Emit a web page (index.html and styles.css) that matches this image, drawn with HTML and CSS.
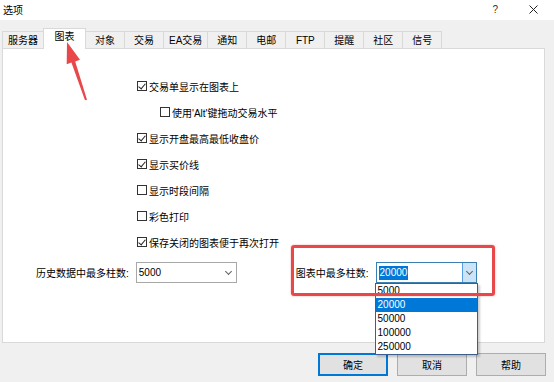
FILE: index.html
```html
<!doctype html>
<html lang="zh-CN">
    <head>
        <meta charset="UTF-8" />
        <title>选项</title>
        <link rel="stylesheet" href="styles.css">
    </head>
    <body>
        <div class="dialog">
            <div class="titlebar">
                <span class="title">选项</span>
                <span class="help">?</span>
                <svg class="close" width="9" height="9" viewBox="0 0 9 9">
                    <path d="M0.5 0.5 L8.5 8.5 M8.5 0.5 L0.5 8.5" stroke="#222" stroke-width="1" fill="none" />
                </svg>
            </div>

            <div class="content">
                <div class="tabs">
                    <div class="tab">服务器</div>
                    <div class="tab active">图表</div>
                    <div class="tab">对象</div>
                    <div class="tab">交易</div>
                    <div class="tab">EA交易</div>
                    <div class="tab">通知</div>
                    <div class="tab">电邮</div>
                    <div class="tab">FTP</div>
                    <div class="tab">提醒</div>
                    <div class="tab">社区</div>
                    <div class="tab">信号</div>
                </div>

                <div class="panel">
                    <div class="checks">
                        <label class="check"><span class="box checked"></span>交易单显示在图表上</label>
                        <label class="check sub"><span class="box"></span>使用'Alt'键拖动交易水平</label>
                        <label class="check"><span class="box checked"></span>显示开盘最高最低收盘价</label>
                        <label class="check"><span class="box checked"></span>显示买价线</label>
                        <label class="check"><span class="box"></span>显示时段间隔</label>
                        <label class="check"><span class="box"></span>彩色打印</label>
                        <label class="check"><span class="box checked"></span>保存关闭的图表便于再次打开</label>
                    </div>

                    <div class="limits">
                        <div class="field">
                            <span class="label">历史数据中最多柱数:</span>
                            <div class="combo">
                                <span class="value">5000</span>
                                <span class="drop"></span>
                            </div>
                        </div>

                        <div class="field field-chart">
                            <span class="label">图表中最多柱数:</span>
                            <div class="combo open">
                                <span class="value"><span class="selected">20000</span></span>
                                <span class="drop"></span>
                                <ul class="list">
                                    <li>5000</li>
                                    <li class="current">20000</li>
                                    <li>50000</li>
                                    <li>100000</li>
                                    <li>250000</li>
                                </ul>
                            </div>
                            <div class="mark"></div>
                        </div>
                    </div>
                </div>

                <div class="buttons">
                    <button class="btn btn-default">确定</button>
                    <button class="btn">取消</button>
                    <button class="btn">帮助</button>
                </div>
            </div>

            <svg class="arrow" width="30" height="64" viewBox="0 0 30 64">
                <polygon points="7,2 20,19.8 15.2,21.4 27,59.7 25,60.3 11.4,22.6 6.7,24.2" fill="#e84849" />
            </svg>
        </div>
    </body>
</html>
```

FILE: styles.css
```css
* {
    margin: 0;
    padding: 0;
    box-sizing: border-box;
}

body {
    font-family: "Liberation Sans", "Noto Sans CJK SC", sans-serif;
    font-size: 10px;
    color: #000;
    background: #f0f0f0;
    width: 554px;
    height: 382px;
    overflow: hidden;
}

.dialog {
    position: relative;
    height: 382px;
}

/* title bar */

.titlebar {
    height: 20px;
    background: #fff;
    display: flex;
    align-items: center;
    padding-left: 3px;
    padding-bottom: 2px;
}

.title {
    flex: 1;
}

.help {
    font-size: 10px;
    color: #333;
    margin-right: 31px;
}

.close {
    margin-right: 16px;
}

/* tabs */

.content {
    padding: 8px 8px 0 2px;
}

.tabs {
    display: flex;
    align-items: flex-start;
    height: 20px;
    position: relative;
    z-index: 1;
}

.tab {
    min-width: 40px;
    height: 17px;
    margin-top: 3px;
    padding: 0 5px;
    margin-right: -1px;
    border: 1px solid #d9d9d9;
    border-bottom: none;
    background: #f0f0f0;
    display: flex;
    align-items: center;
    justify-content: center;
    line-height: 1;
    padding-top: 1px;
}

.tab.active {
    min-width: 43px;
    height: 21px;
    margin-top: 0;
    background: #fff;
    padding-top: 0;
    padding-bottom: 4px;
    position: relative;
    z-index: 1;
}

/* panel */

.panel {
    width: 543px;
    height: 295px;
    background: #fff;
    border: 1px solid #d9d9d9;
    padding-top: 29px;
}

.checks {
    display: flex;
    flex-direction: column;
    gap: 10px;
    padding-left: 134px;
}

.check {
    display: flex;
    align-items: center;
    height: 16px;
}

.check.sub {
    margin-left: 23px;
}

.box {
    width: 10px;
    height: 10px;
    border: 1px solid #333;
    background: #fff;
    margin-right: 2px;
    position: relative;
}

.box.checked::after {
    content: "";
    position: absolute;
    left: 2px;
    top: 0px;
    width: 3px;
    height: 6px;
    border: solid #222;
    border-width: 0 1px 1px 0;
    transform: rotate(40deg);
}

/* bar limit fields */

.limits {
    display: flex;
    margin-top: 12px;
    padding-left: 33px;
}

.field {
    display: flex;
    align-items: center;
    gap: 7px;
}

.field-chart {
    position: relative;
    margin-left: 59px;
}

.combo {
    position: relative;
    width: 101px;
    height: 21px;
    border: 1px solid #a8a8a8;
    background: #fff;
    display: flex;
}

.value {
    flex: 1;
    display: flex;
    align-items: center;
    padding-left: 2px;
}

.drop {
    width: 14px;
    display: flex;
    align-items: center;
    justify-content: center;
}

.drop::after {
    content: "";
    width: 4px;
    height: 4px;
    border: solid #606060;
    border-width: 0 1px 1px 0;
    transform: rotate(45deg);
    margin-top: -3px;
}

.combo.open {
    border-color: #3c7fb1;
}

.combo.open .drop {
    background: #cce4f7;
    border-left: 1px solid #569de5;
}

.selected {
    background: #0078d7;
    color: #fff;
    padding: 1px 1px 2px;
}

.list {
    position: absolute;
    top: 20px;
    left: -2px;
    width: 103px;
    list-style: none;
    background: #fff;
    border: 1px solid #3d5f8e;
    box-shadow: 2px 2px 2px rgba(0, 0, 0, 0.2);
}

.list li {
    height: 14px;
    line-height: 14px;
    padding-left: 2px;
}

.list li.current {
    background: #0078d7;
    color: #fff;
}

.mark {
    position: absolute;
    top: -17px;
    left: -5px;
    right: -18px;
    bottom: -13px;
    border: 3px solid #e84849;
    border-radius: 3px;
    box-shadow: 0 0 2px rgba(232, 72, 73, 0.5);
    pointer-events: none;
}

/* buttons */

.buttons {
    display: flex;
    justify-content: flex-end;
    gap: 9px;
    margin-top: 10px;
}

.btn {
    width: 70px;
    height: 23px;
    background: #e1e1e1;
    border: 1px solid #adadad;
    font-family: inherit;
    font-size: 10px;
    color: #000;
}

.btn-default {
    border-color: #0078d7;
    box-shadow: inset 0 0 0 1px #0078d7;
}

.arrow {
    position: absolute;
    left: 60px;
    top: 40px;
    z-index: 2;
}
```
